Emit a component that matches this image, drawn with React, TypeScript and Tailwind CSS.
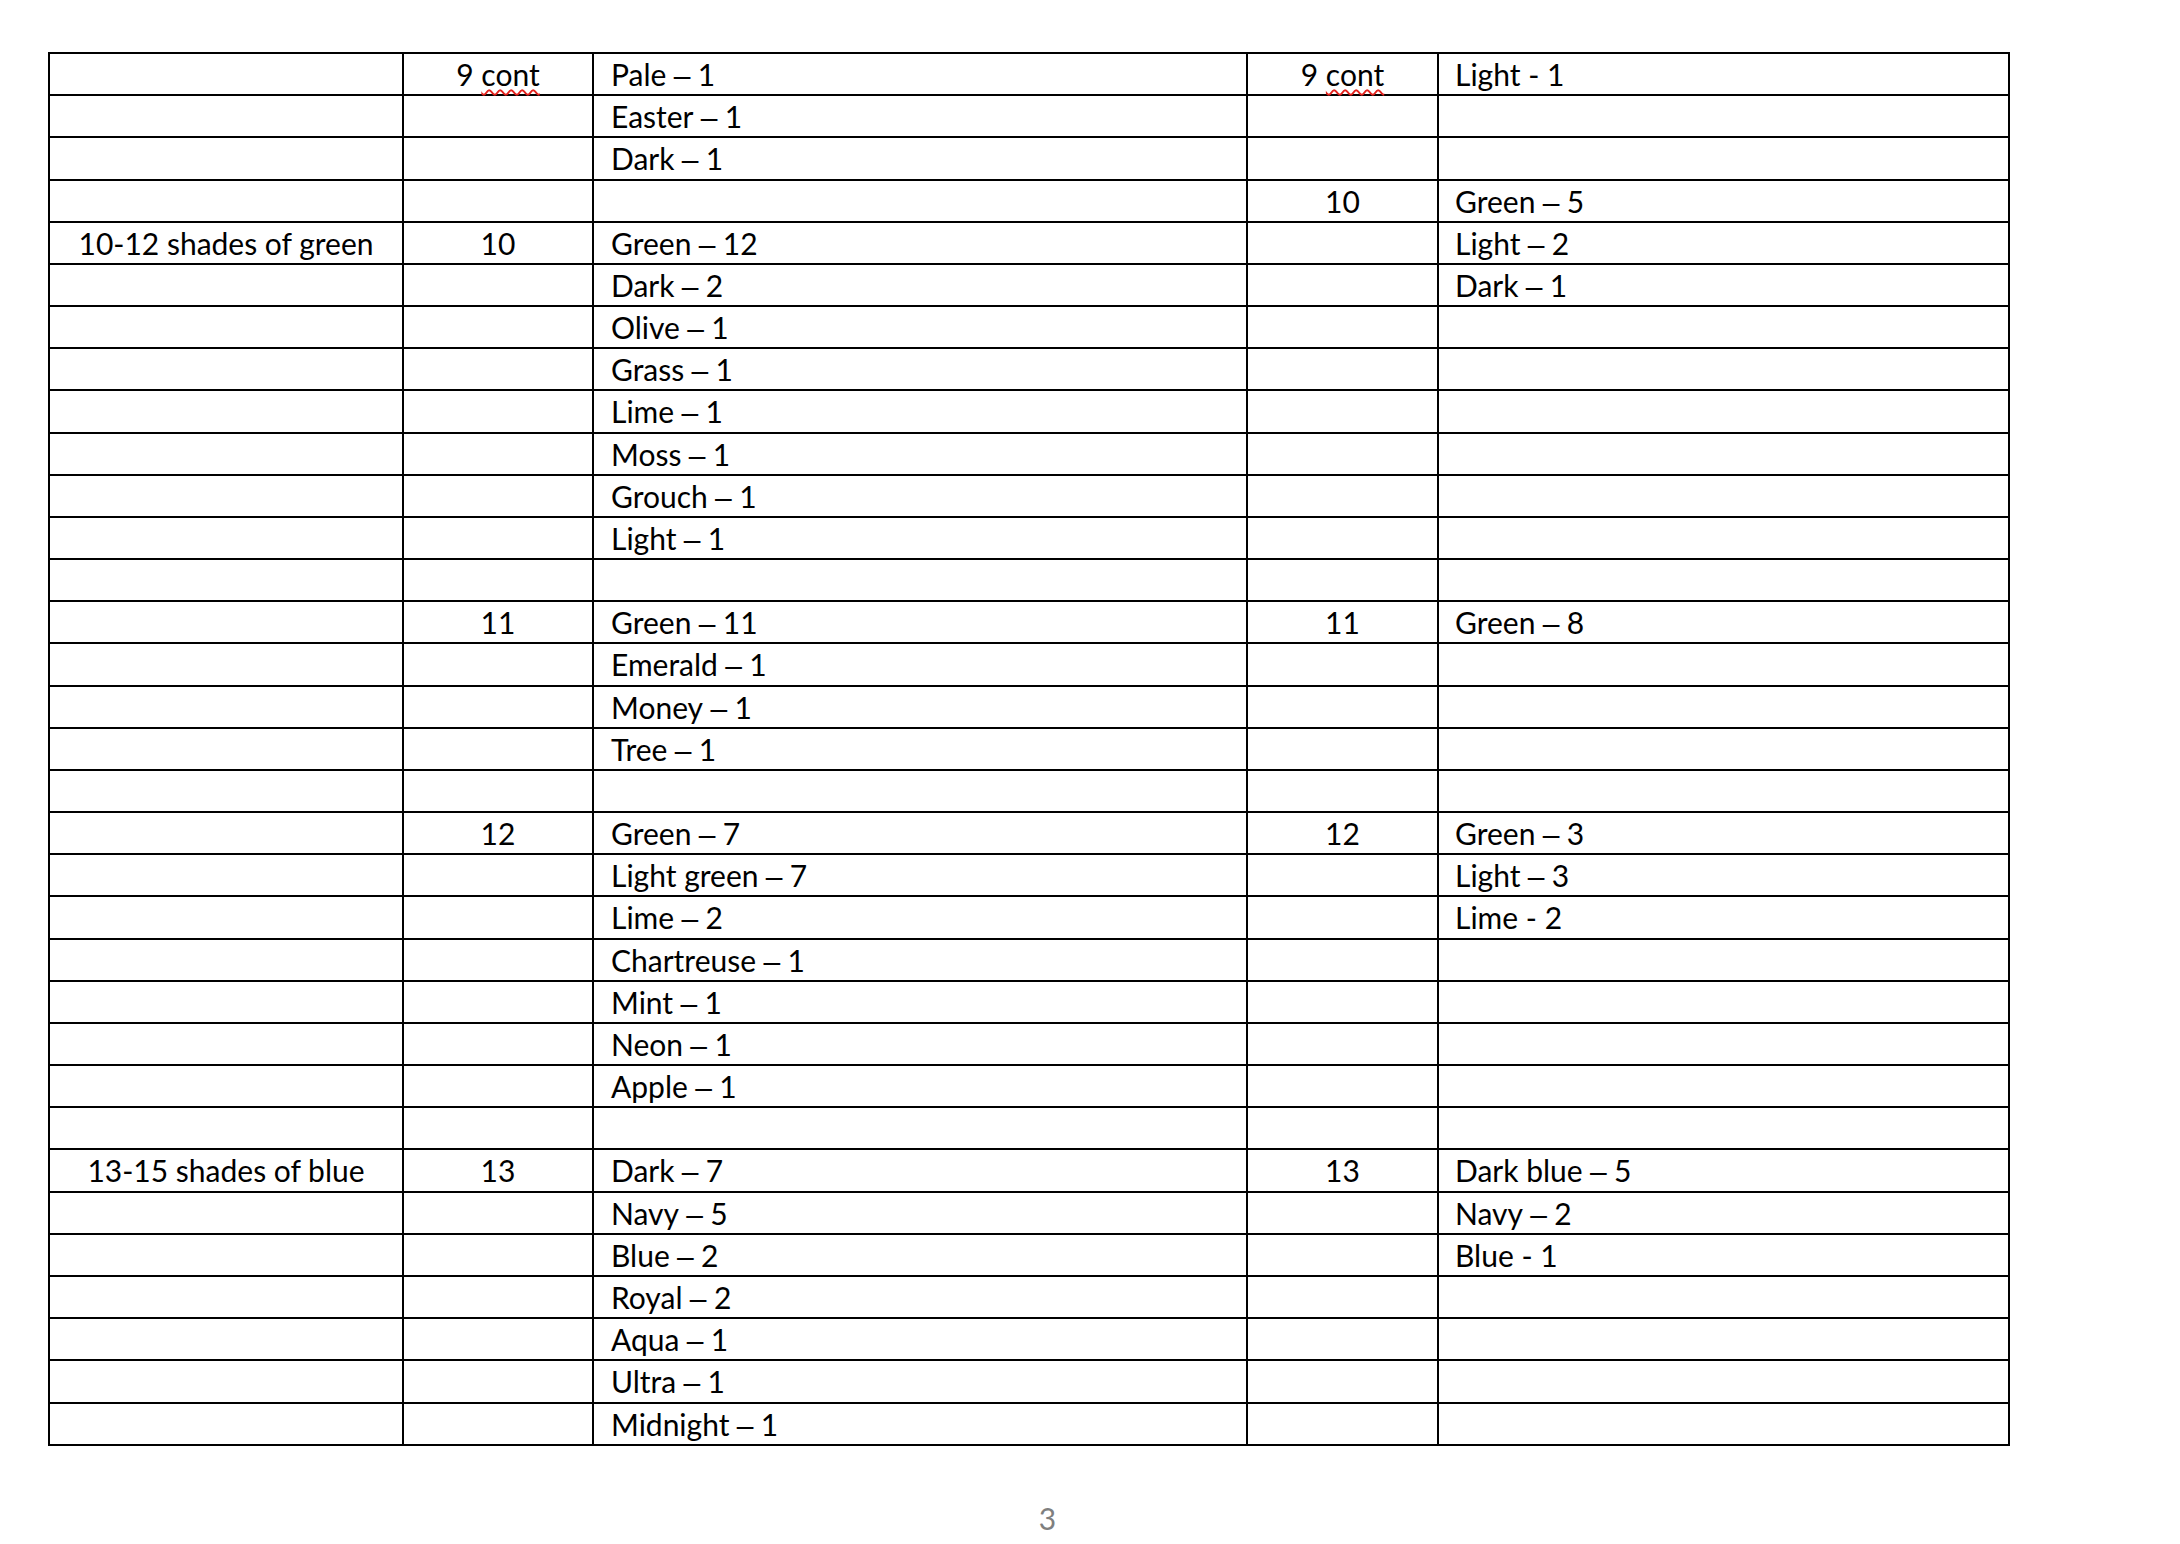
import React from "react";

type Row = [string, string, string, string, string];

const rows: Row[] = [
  ["", "9 cont", "Pale – 1", "9 cont", "Light - 1"],
  ["", "", "Easter – 1", "", ""],
  ["", "", "Dark – 1", "", ""],
  ["", "", "", "10", "Green – 5"],
  ["10-12 shades of green", "10", "Green – 12", "", "Light – 2"],
  ["", "", "Dark – 2", "", "Dark – 1"],
  ["", "", "Olive – 1", "", ""],
  ["", "", "Grass – 1", "", ""],
  ["", "", "Lime – 1", "", ""],
  ["", "", "Moss – 1", "", ""],
  ["", "", "Grouch – 1", "", ""],
  ["", "", "Light – 1", "", ""],
  ["", "", "", "", ""],
  ["", "11", "Green – 11", "11", "Green – 8"],
  ["", "", "Emerald – 1", "", ""],
  ["", "", "Money – 1", "", ""],
  ["", "", "Tree – 1", "", ""],
  ["", "", "", "", ""],
  ["", "12", "Green – 7", "12", "Green – 3"],
  ["", "", "Light green – 7", "", "Light – 3"],
  ["", "", "Lime – 2", "", "Lime - 2"],
  ["", "", "Chartreuse – 1", "", ""],
  ["", "", "Mint – 1", "", ""],
  ["", "", "Neon – 1", "", ""],
  ["", "", "Apple – 1", "", ""],
  ["", "", "", "", ""],
  ["13-15 shades of blue", "13", "Dark – 7", "13", "Dark blue – 5"],
  ["", "", "Navy – 5", "", "Navy – 2"],
  ["", "", "Blue – 2", "", "Blue - 1"],
  ["", "", "Royal – 2", "", ""],
  ["", "", "Aqua – 1", "", ""],
  ["", "", "Ultra – 1", "", ""],
  ["", "", "Midnight – 1", "", ""],
];

function Num({ text }: { text: string }) {
  if (text === "9 cont") {
    return (
      <span>
        9{" "}
        <span className="underline decoration-wavy decoration-[#e3211c] decoration-2 underline-offset-[3px]">
          cont
        </span>
      </span>
    );
  }
  return <span>{text}</span>;
}

function Item({ text }: { text: string }) {
  const idx = text.indexOf(" – ");
  if (idx < 0) return <span>{text}</span>;
  return (
    <span>
      {text.slice(0, idx)}
      <span className="[word-spacing:-1px]" style={{ fontFamily: "'Liberation Sans', sans-serif" }}>
        {" – "}
      </span>
      {text.slice(idx + 3)}
    </span>
  );
}

export default function App() {
  return (
    <div
      className="w-[2180px] h-[1544px] bg-white text-black pt-[52px] pl-[48px]"
      style={{ fontFamily: "Lato, 'Open Sans', sans-serif" }}
    >
      <div className="w-[1962px] border-l-2 border-t-2 border-black text-[30px] leading-[40px]">
        {rows.map((r, i) => (
          <div key={i} className="flex h-[42.18px] border-b-2 border-black">
            <div className="w-[354px] shrink-0 border-r-2 border-black text-center">{r[0]}</div>
            <div className="w-[190px] shrink-0 border-r-2 border-black text-center">
              <Num text={r[1]} />
            </div>
            <div className="w-[654px] shrink-0 border-r-2 border-black pl-[17px]">
              <Item text={r[2]} />
            </div>
            <div className="w-[191px] shrink-0 border-r-2 border-black text-center">
              <Num text={r[3]} />
            </div>
            <div className="w-[571px] shrink-0 border-r-2 border-black pl-[16px]">
              <Item text={r[4]} />
            </div>
          </div>
        ))}
      </div>
      <div className="w-[1999px] mt-[52px] text-center text-[30px] leading-[40px] text-[#7f7f7f]">3</div>
    </div>
  );
}
